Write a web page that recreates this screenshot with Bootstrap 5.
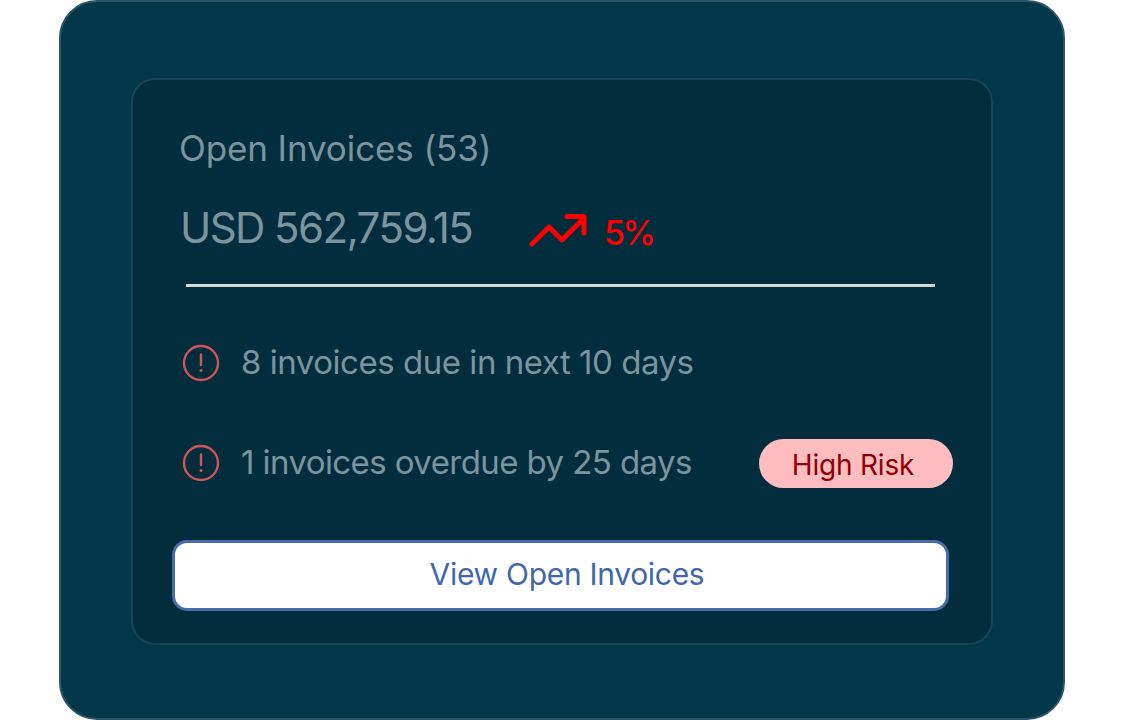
<!doctype html>
<html lang="en"><head><meta charset="utf-8"><title>Open Invoices</title>
<link href="https://cdn.jsdelivr.net/npm/bootstrap@5.3.0/dist/css/bootstrap.min.css" rel="stylesheet">
<style>
html,body{height:720px;overflow:hidden;background:#fff}
body{font-family:Inter,"Liberation Sans",sans-serif}
.shell{width:1006px;height:720px;margin-left:59px;padding:76px 70px 74px;background:#03374a;border:2px solid #2c5565;border-radius:38px}
.panel{height:567px;background:#022d3d;border:2px solid #1a4455;border-radius:24px;padding:48px 38px 32px 39px}
.title-line{font-size:35px;line-height:40px;color:#7b959e;letter-spacing:-.1px;margin-left:7px}
.amount-line{margin:36px 0 0 8px;height:48px}
.amount{font-size:42px;line-height:48px;color:#7b959e;letter-spacing:-1.55px;width:349px}
.trend{margin-top:3px}
.pct{font-size:34px;font-weight:500;color:#f00;letter-spacing:-2.8px;line-height:48px;margin-left:16px;margin-top:9px}
.rule{height:3px;background:#d5d9da;margin:32px 18px 0 14px}
.risk-row{height:60px;color:#7b959e;font-size:33px;letter-spacing:-.47px;margin-left:10px}
.risk-text{margin-left:21px}
.tag{margin-left:auto;width:194px;height:49px;border-radius:25px;background:#ffbdbf;color:#8f0006;font-size:28px;display:flex;align-items:center;justify-content:center;letter-spacing:-.2px;padding:4px 6px 0 0}
.go{display:block;width:777px;height:70px;border:3px solid #4a6ba9;border-radius:15px;background:#fff;color:#4068a8;font-size:30px;letter-spacing:-.3px;line-height:62px;text-align:center;padding:0 0 0 13px}
.go:hover{background:#fff;color:#4068a8;border-color:#4a6ba9}
.row-a{margin-top:46px}
.row-b{margin-top:40px}
.row-b .risk-text{letter-spacing:-.58px}
.go-gap{margin-top:47px;height:71px}
</style></head><body>
<div class="shell"><div class="panel d-flex flex-column">
<div class="title-line">Open Invoices (53)</div>
<div class="amount-line d-flex align-items-center">
<div class="amount">USD 562,759.15</div>
<svg width="59" height="36" viewBox="0 0 59 36" fill="none" stroke="#f00" stroke-width="5" stroke-linecap="round" stroke-linejoin="round" class="flex-shrink-0 trend"><path d="M3 32 L20 15 L33 28 L54 7"/><path d="M38 4.5 H55 V21"/></svg>
<div class="pct">5%</div>
</div>
<div class="rule"></div>
<div class="risk-row row-a d-flex align-items-center">
<svg width="38" height="38" viewBox="0 0 38 38" fill="none" stroke="#d45459" class="flex-shrink-0"><circle cx="19" cy="19" r="17" stroke-width="2.4"/><path d="M19 10.5V21" stroke-width="2.4" stroke-linecap="round"/><circle cx="19" cy="26.5" r="1.5" fill="#d45459" stroke="none"/></svg>
<div class="risk-text">8 invoices due in next 10 days</div>
</div>
<div class="risk-row row-b d-flex align-items-center">
<svg width="38" height="38" viewBox="0 0 38 38" fill="none" stroke="#d45459" class="flex-shrink-0"><circle cx="19" cy="19" r="17" stroke-width="2.4"/><path d="M19 10.5V21" stroke-width="2.4" stroke-linecap="round"/><circle cx="19" cy="26.5" r="1.5" fill="#d45459" stroke="none"/></svg>
<div class="risk-text">1 invoices overdue by 25 days</div>
<div class="tag">High Risk</div>
</div>
<a class="btn go go-gap" href="#">View Open Invoices</a>
</div></div>
</body></html>
